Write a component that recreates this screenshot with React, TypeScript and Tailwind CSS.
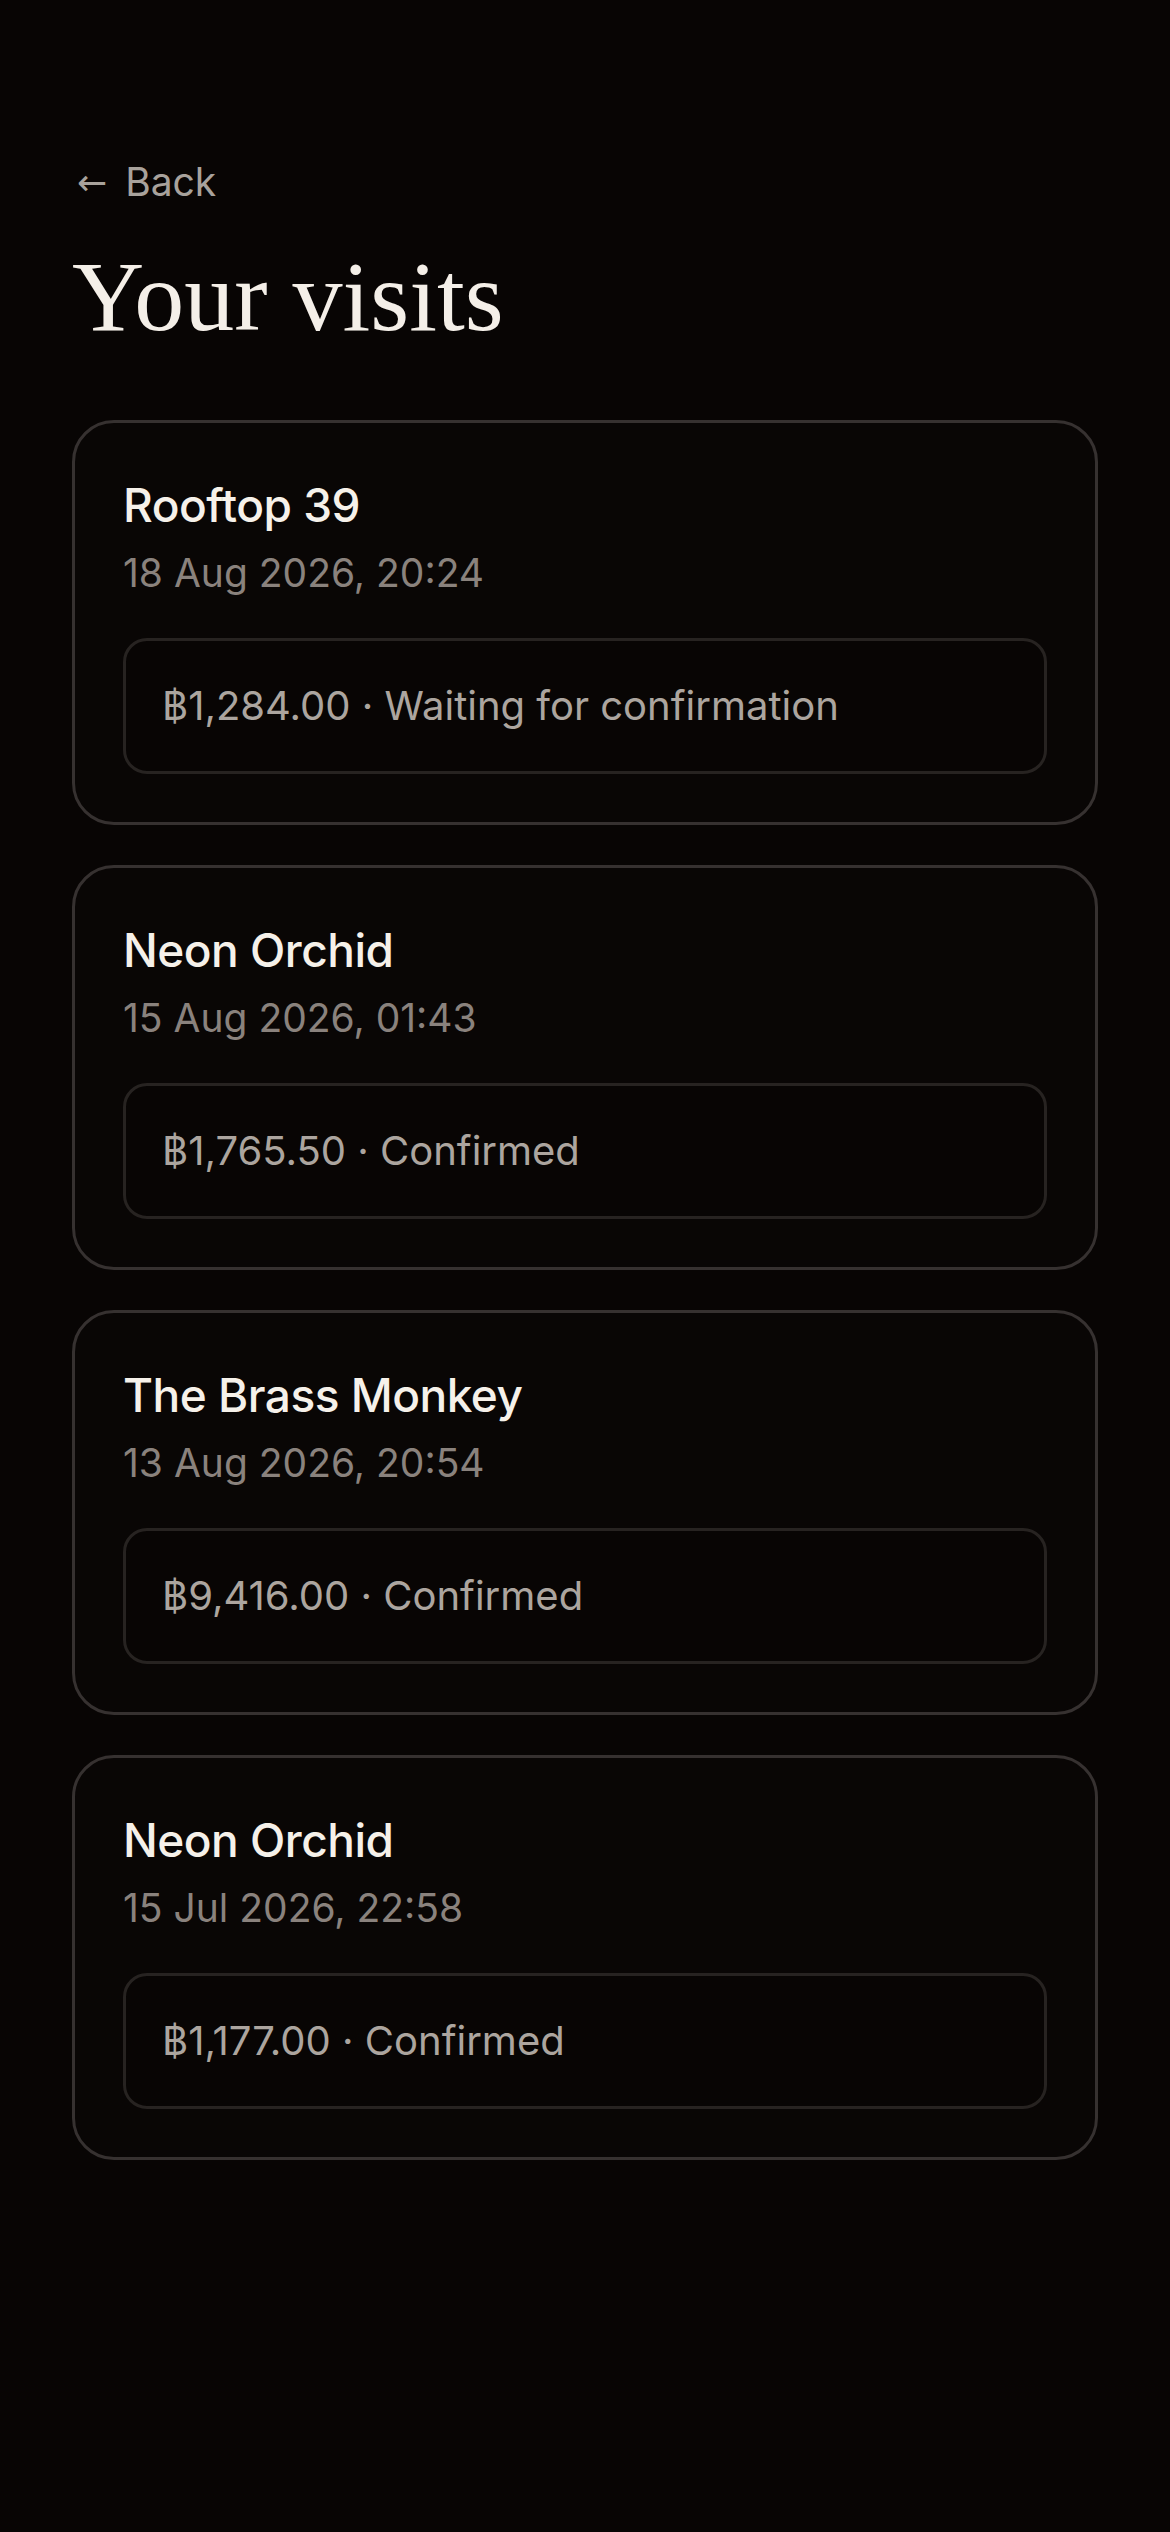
import React from 'react';

interface Visit {
  id: number;
  venue: string;
  when: string;
  amount: string;
  status: string;
}

const visits: Visit[] = [
  { id: 1, venue: 'Rooftop 39', when: '18 Aug 2026, 20:24', amount: '฿1,284.00', status: 'Waiting for confirmation' },
  { id: 2, venue: 'Neon Orchid', when: '15 Aug 2026, 01:43', amount: '฿1,765.50', status: 'Confirmed' },
  { id: 3, venue: 'The Brass Monkey', when: '13 Aug 2026, 20:54', amount: '฿9,416.00', status: 'Confirmed' },
  { id: 4, venue: 'Neon Orchid', when: '15 Jul 2026, 22:58', amount: '฿1,177.00', status: 'Confirmed' },
];

export default function App() {
  return (
    <div className="min-h-[2532px] bg-[#080504] px-[72px] pt-[153px] pb-[72px] font-['Inter','Noto_Sans',sans-serif]">
      {/* Back link */}
      <a href="#" className="block text-[39px] leading-[1.5] text-[#a8a29c]">
        <span className="inline-block pl-[5px] pr-[18px] font-['DejaVu_Sans',sans-serif] text-[36px] align-[1px]">←</span>Back
      </a>

      <h1 className="mt-[30px] font-['Liberation_Serif','Times_New_Roman',serif] text-[100px] leading-[1.1] text-[#f4efe8]">
        Your visits
      </h1>

      {/* Visit cards */}
      <div className="mt-[68px] flex flex-col gap-[40px]">
        {visits.map((visit) => (
          <div
            key={visit.id}
            className="rounded-[42px] border-[3px] border-[#363130] bg-[#090605] p-[48px]"
          >
            <h2 className="text-[46px] leading-[68px] font-medium tracking-[-0.5px] text-[#f6f1ea]">
              {visit.venue}
            </h2>
            <p className="mt-[5px] text-[39px] leading-[58px] text-[#8a827d]">{visit.when}</p>
            <div className="mt-[36px] rounded-[24px] border-[3px] border-[#272321] bg-[#080504] px-[36px] py-[36px] text-[40px] leading-[58px] text-[#aca59f]">
              {visit.amount} · {visit.status}
            </div>
          </div>
        ))}
      </div>
    </div>
  );
}
